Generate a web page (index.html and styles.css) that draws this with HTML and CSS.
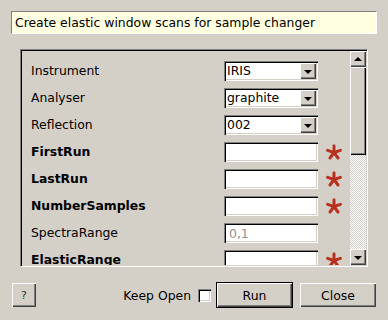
FILE: index.html
```html
<!DOCTYPE html>
<html>
<head>
<meta charset="utf-8">
<link rel="stylesheet" href="styles.css">
</head>
<body>
<div class="dialog">
  <div class="desc">Create elastic window scans for sample changer</div>
  <div class="frame">
    <div class="viewport">
      <div class="form">
        <div class="label">Instrument</div>
        <div class="combo"><span class="ctext">IRIS</span><span class="carrow"><i class="tri"></i></span></div>
        <div class="star"></div>

        <div class="label">Analyser</div>
        <div class="combo"><span class="ctext">graphite</span><span class="carrow"><i class="tri"></i></span></div>
        <div class="star"></div>

        <div class="label">Reflection</div>
        <div class="combo"><span class="ctext">002</span><span class="carrow"><i class="tri"></i></span></div>
        <div class="star"></div>

        <div class="label bold">FirstRun</div>
        <div class="edit"></div>
        <div class="star"><svg viewBox="0 0 16 16" width="16" height="16"><g stroke="#b8321f" stroke-width="3" stroke-linecap="round"><line x1="8" y1="8.5" x2="8" y2="1.8"/><line x1="8" y1="8.5" x2="14.4" y2="6.4"/><line x1="8" y1="8.5" x2="12" y2="14"/><line x1="8" y1="8.5" x2="4" y2="14"/><line x1="8" y1="8.5" x2="1.6" y2="6.4"/></g></svg></div>

        <div class="label bold">LastRun</div>
        <div class="edit"></div>
        <div class="star"><svg viewBox="0 0 16 16" width="16" height="16"><g stroke="#b8321f" stroke-width="3" stroke-linecap="round"><line x1="8" y1="8.5" x2="8" y2="1.8"/><line x1="8" y1="8.5" x2="14.4" y2="6.4"/><line x1="8" y1="8.5" x2="12" y2="14"/><line x1="8" y1="8.5" x2="4" y2="14"/><line x1="8" y1="8.5" x2="1.6" y2="6.4"/></g></svg></div>

        <div class="label bold">NumberSamples</div>
        <div class="edit"></div>
        <div class="star"><svg viewBox="0 0 16 16" width="16" height="16"><g stroke="#b8321f" stroke-width="3" stroke-linecap="round"><line x1="8" y1="8.5" x2="8" y2="1.8"/><line x1="8" y1="8.5" x2="14.4" y2="6.4"/><line x1="8" y1="8.5" x2="12" y2="14"/><line x1="8" y1="8.5" x2="4" y2="14"/><line x1="8" y1="8.5" x2="1.6" y2="6.4"/></g></svg></div>

        <div class="label">SpectraRange</div>
        <div class="edit"><span class="ph">0,1</span></div>
        <div class="star"></div>

        <div class="label bold">ElasticRange</div>
        <div class="edit"></div>
        <div class="star"><svg viewBox="0 0 16 16" width="16" height="16"><g stroke="#b8321f" stroke-width="3" stroke-linecap="round"><line x1="8" y1="8.5" x2="8" y2="1.8"/><line x1="8" y1="8.5" x2="14.4" y2="6.4"/><line x1="8" y1="8.5" x2="12" y2="14"/><line x1="8" y1="8.5" x2="4" y2="14"/><line x1="8" y1="8.5" x2="1.6" y2="6.4"/></g></svg></div>
      </div>
    </div>
    <div class="scrollbar">
      <div class="sbtn"><i class="tri up"></i></div>
      <div class="slider"></div>
      <div class="trough"></div>
      <div class="sbtn"><i class="tri"></i></div>
    </div>
  </div>
  <div class="buttons">
    <div class="btn help">?</div>
    <div class="spacer"></div>
    <div class="keep">Keep Open</div>
    <div class="check"></div>
    <div class="btn default">Run</div>
    <div class="btn close">Close</div>
  </div>
</div>
</body>
</html>
```

FILE: styles.css
```css
html, body {
  margin: 0;
  padding: 0;
  background: #d4d0c8;
}
body {
  width: 388px;
  height: 320px;
  overflow: hidden;
  font-family: "DejaVu Sans", sans-serif;
  font-size: 12px;
  color: #000;
}
.dialog {
  padding: 11px 11px 0 11px;
}
.desc {
  height: 23px;
  box-sizing: border-box;
  background: #ffffe1;
  border-top: 1px solid #808080;
  border-left: 1px solid #808080;
  border-right: 1px solid #fff;
  border-bottom: 1px solid #fff;
  padding-left: 3px;
  line-height: 21px;
  font-size: 12.4px;
}
.frame {
  margin: 15px 9px 0 9px;
  height: 218px;
  box-sizing: border-box;
  border-top: 1px solid #808080;
  border-left: 1px solid #808080;
  border-right: 1px solid #fff;
  border-bottom: 1px solid #fff;
  box-shadow: inset 1px 1px #000, inset -1px -1px #d4d0c8;
  padding: 1px;
  display: flex;
}
.viewport {
  flex: 1;
  overflow: hidden;
  padding: 10px 0 0 9px;
}
.form {
  display: grid;
  grid-template-columns: 186px 94px 16px;
  column-gap: 7px;
  row-gap: 7px;
  grid-auto-rows: 20px;
  align-items: center;
}
.label {
  font-size: 12.4px;
  white-space: nowrap;
  margin-top: -2px;
}
.bold { font-weight: bold; }
.combo, .edit {
  height: 20px;
  box-sizing: border-box;
  background: #fff;
  box-shadow: inset 1px 1px #808080, inset 2px 2px #000, inset -1px -1px #fff, inset -2px -2px #d4d0c8;
  display: flex;
  align-items: center;
  padding: 2px;
  position: relative;
}
.ctext {
  flex: 1;
  padding-left: 1px;
  font-size: 12.4px;
  line-height: 16px;
}
.ph {
  padding-left: 3px;
  color: #909090;
  font-size: 12.4px;
}
.carrow {
  width: 16px;
  height: 16px;
  box-sizing: border-box;
  background: #d4d0c8;
  box-shadow: inset 1px 1px #fff, inset -1px -1px #404040, inset -2px -2px #808080;
  display: flex;
  align-items: center;
  justify-content: center;
}
.tri {
  width: 0;
  height: 0;
  border-left: 4px solid transparent;
  border-right: 4px solid transparent;
  border-top: 4px solid #000;
  margin-top: 1px;
}
.tri.up {
  border-top: none;
  border-bottom: 4px solid #000;
  margin-top: -1px;
}
.star {
  height: 16px;
  width: 16px;
  margin-left: 1px;
}
.star svg { display: block; }
.scrollbar {
  width: 16px;
  display: flex;
  flex-direction: column;
}
.sbtn {
  height: 16px;
  box-sizing: border-box;
  background: #d4d0c8;
  box-shadow: inset 1px 1px #fff, inset -1px -1px #404040, inset -2px -2px #808080;
  display: flex;
  align-items: center;
  justify-content: center;
}
.slider {
  height: 88px;
  background: #d4d0c8;
  box-shadow: inset 1px 1px #fff, inset -1px -1px #000, inset -2px -2px #808080;
}
.trough {
  flex: 1;
  background-color: #fff;
  background-image: linear-gradient(45deg, #d4d0c8 25%, transparent 25%, transparent 75%, #d4d0c8 75%),
                    linear-gradient(45deg, #d4d0c8 25%, transparent 25%, transparent 75%, #d4d0c8 75%);
  background-size: 2px 2px;
  background-position: 0 0, 1px 1px;
}
.buttons {
  margin: 15px 1px 0 1px;
  height: 26px;
  display: flex;
  align-items: center;
}
.spacer { flex: 1; }
.btn {
  height: 24px;
  box-sizing: border-box;
  background: #d4d0c8;
  box-shadow: inset 1px 1px #fff, inset -1px -1px #404040, inset -2px -2px #808080;
  display: flex;
  align-items: center;
  justify-content: center;
  font-size: 12.4px;
}
.help {
  width: 24px;
  font-size: 11px;
  color: #333;
}
.keep {
  font-size: 12.4px;
  margin-right: 7px;
}
.check {
  width: 13px;
  height: 13px;
  box-sizing: border-box;
  background: #fff;
  box-shadow: inset 1px 1px #808080, inset 2px 2px #000, inset -1px -1px #fff, inset -2px -2px #d4d0c8;
  margin-right: 5px;
}
.default {
  width: 77px;
  height: 26px;
  border: 1px solid #000;
  margin-right: 7px;
}
.close {
  width: 76px;
}
```
